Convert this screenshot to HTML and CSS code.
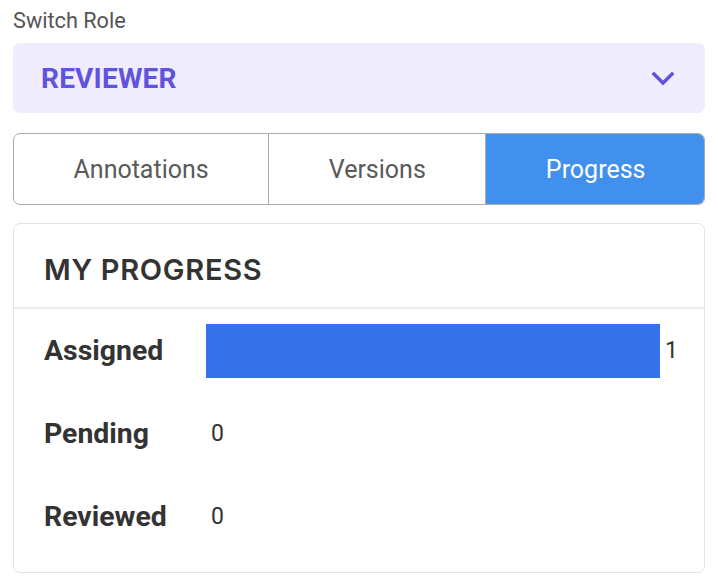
FILE: index.html
```html
<!DOCTYPE html>
<html>
<head>
<meta charset="utf-8">
<link rel="stylesheet" href="styles.css">
</head>
<body>
<div class="panel">
  <div class="role-label">Switch Role</div>
  <div class="role-select">
    <span class="role-name">REVIEWER</span>
    <svg class="chevron" width="22" height="14" viewBox="0 0 22 14"><path d="M2 2 L11 11 L20 2" fill="none" stroke="#6153de" stroke-width="3.4" stroke-linecap="square"/></svg>
  </div>
  <div class="tabs">
    <div class="tab">Annotations</div>
    <div class="tab">Versions</div>
    <div class="tab tab-active">Progress</div>
  </div>
  <div class="card">
    <div class="card-head">MY PROGRESS</div>
    <div class="card-body">
      <div class="row">
        <div class="row-label">Assigned</div>
        <div class="row-value"><div class="bar" style="width:454px"></div><span class="num">1</span></div>
      </div>
      <div class="row">
        <div class="row-label">Pending</div>
        <div class="row-value"><span class="num">0</span></div>
      </div>
      <div class="row">
        <div class="row-label">Reviewed</div>
        <div class="row-value"><span class="num">0</span></div>
      </div>
    </div>
  </div>
</div>
</body>
</html>
```

FILE: styles.css
```css
* { box-sizing: border-box; }
body { margin: 0; background: #fff; font-family: Roboto, "Liberation Sans", sans-serif; }
.panel { padding: 8px 13px 0 13px; width: 718px; }
.role-label { font-size: 21.7px; line-height: 26px; color: #555; margin-bottom: 9px; }
.role-select {
  height: 70px; background: #efecfd; border-radius: 7px;
  display: flex; align-items: center; justify-content: space-between;
  padding: 0 31px 0 28px;
}
.role-name { font-size: 28px; font-weight: 700; color: #6153de; letter-spacing: 0.2px; }
.chevron { display: block; margin-top: 2px; }
.tabs {
  margin-top: 20px; display: flex; height: 72px;
  border: 1px solid #ababab; border-radius: 7px; overflow: hidden;
}
.tab {
  flex: 1 1 auto; display: flex; align-items: center; justify-content: center;
  font-size: 25px; color: #5a5a5a; border-right: 1px solid #ababab;
}
.tab:last-child { border-right: none; }
.tab-active { background: #4290ee; color: #fff; margin: -1px -1px -1px 0; }
.card {
  margin-top: 18px; height: 350px; border: 1px solid #e3e3e3; border-radius: 7px;
}
.card-head {
  height: 85px; border-bottom: 2px solid #ebebeb; padding: 29px 0 0 30px;
  font-family: Inter, "Open Sans", sans-serif; font-weight: 600; font-size: 29px;
  color: #333; letter-spacing: 0.7px; line-height: 34px;
}
.card-body { padding: 0 0 0 30px; }
.row { display: flex; align-items: center; height: 83px; }
.row-label { width: 162px; font-size: 28.4px; font-weight: 700; color: #333; }
.row-value { display: flex; align-items: center; }
.bar { height: 54px; background: #3572ea; }
.num { font-size: 23px; color: #333; margin-left: 5px; }
```
